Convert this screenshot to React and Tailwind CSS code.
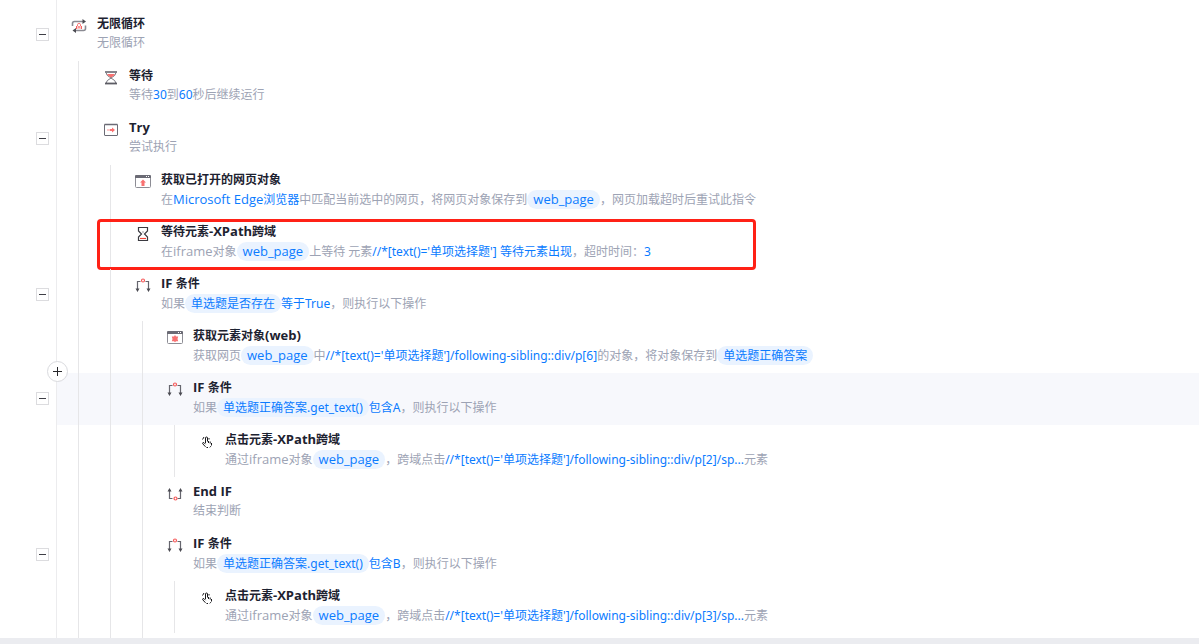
const icons = {
    loop: (
        <>
            <path d="M1.500 8V5.500q0-2 2-2H12" stroke="#8a8a92" strokeWidth="1.600" />
            <path d="M11.500 1L15 3.500 11.500 6z" fill="#4b4b52" />
            <path d="M14.500 7.500v3q0 2-2 2H4" stroke="#8a8a92" strokeWidth="1.600" />
            <path d="M5 10L1.500 12.500 5 15z" fill="#4b4b52" />
            <path d="M6.500 8V6.500q0-1 1.500-1t1.500 1V8" stroke="#f87171" />
            <path d="M5 8h6v3H5z" fill="#fecaca" />
            <path d="M5.500 8v3M8 8v2M10.500 8v3" stroke="#f4605f" />
        </>
    ),
    wait: (
        <>
            <path d="M3 2.500q0 3 5 5.500q-5 2.500-5 5.500M13 2.500q0 3-5 5.500q5 2.500 5 5.500" stroke="#77777f" />
            <path d="M4 4h8Q11 6 8 7.500Q5 6 4 4z" fill="#f87171" />
            <path d="M2 2h12" stroke="#85858d" strokeWidth="2" />
            <path d="M2 13.500h12" stroke="#5c5c64" strokeWidth="1.800" />
        </>
    ),
    tryBox: (
        <>
            <rect x="1.500" y="2.500" width="13" height="11" rx=".5" stroke="#6b6b75" />
            <path d="M1.500 2.500h13" stroke="#6b6b75" strokeWidth="1.500" />
            <path d="M4 8h3" stroke="#fecaca" strokeWidth="2" />
            <path d="M7 8h3" stroke="#f87171" strokeWidth="2" />
            <path d="M9 5.500L12 8l-3 2.500z" fill="#f87171" />
        </>
    ),
    page: (
        <>
            <rect x=".5" y="2.500" width="15" height="11" rx="1" stroke="#8d8d95" />
            <path d="M0 2q0-1 1-1h14q1 0 1 1v2H0z" fill="#6b6b75" />
            <path d="M11 2.500h1M13 2.500h1" stroke="#fff" />
            <path d="M8 5.500l3 3H9.500V12h-3V8.500H5z" fill="#f87171" />
        </>
    ),
    element: (
        <>
            <rect x=".5" y="2.500" width="15" height="11" rx="1" stroke="#8d8d95" />
            <path d="M0 2q0-1 1-1h14q1 0 1 1v2H0z" fill="#6b6b75" />
            <path d="M11 2.500h1M13 2.500h1" stroke="#fff" />
            <path d="M8 5l1 1.500h2.200L10.500 9l.7 2.200H9L8 12.200l-1-1H4.800L5.500 9l-.7-2.500H7z" fill="#f87171" />
        </>
    ),
    hourglass: (
        <>
            <path d="M3.500 1.500h9v3.500L9.500 8l3 3v3.500h-9V11l3-3-3-3z" stroke="#3a3a40" strokeWidth="1.200" />
            <path d="M7.500 5.500h1v1h-1z" fill="#3a3a40" />
            <path d="M5 12.500h6" stroke="#f04438" strokeWidth="1.200" />
        </>
    ),
    branch: (
        <>
            <path d="M5.500 3.500h-3V12M10.500 3.500h3V12" stroke="#66666e" strokeWidth="1.200" />
            <path d="M.5 10.500h4l-2 3.500zM11.500 10.500h4l-2 3.500z" fill="#4b4b52" />
            <circle cx="8" cy="2.500" r="1.500" stroke="#f65a5a" strokeWidth="1.200" />
        </>
    ),
    branchEnd: (
        <>
            <path d="M5.500 12.500h-3V4M10.500 12.500h3V4" stroke="#66666e" strokeWidth="1.200" />
            <path d="M.5 5.500h4L2.500 2zM11.500 5.500h4l-2-3.500z" fill="#4b4b52" />
            <circle cx="8.500" cy="12.500" r="1.500" stroke="#f65a5a" strokeWidth="1.200" />
        </>
    ),
    click: (
        <>
            <path d="M6.500 9V4q0-1 1-1t1 1v3.500M12.500 9v2.500M11.800 12.200l-1 1.200M9 13.500H7.500M6.500 12.800L3.500 9.500q0-1.200 1.500-.8l1.500 1.500" stroke="#18181b" />
            <path d="M3.500 5.500L5 3M10 5.500V4M9.500 7v2M11.200 7.500v2" stroke="#18181b" />
        </>
    ),
}

// strings are plain text, { b } is a highlighted value and { tag } is a variable
const steps = [
    { depth: 0, icon: "loop", title: "无限循环", desc: ["无限循环"], fold: true },
    { depth: 1, icon: "wait", title: "等待", desc: ["等待", { b: "30" }, "到", { b: "60" }, "秒后继续运行"] },
    { depth: 1, icon: "tryBox", title: "Try", desc: ["尝试执行"], fold: true },
    {
        depth: 2, icon: "page", title: "获取已打开的网页对象",
        desc: ["在", { b: "Microsoft Edge浏览器" }, "中匹配当前选中的网页，将网页对象保存到", { tag: "web_page" }, "，网页加载超时后重试此指令"],
    },
    {
        depth: 2, icon: "hourglass", title: "等待元素-XPath跨域", marked: true,
        desc: ["在iframe对象", { tag: "web_page" }, "上等待 元素", { b: "//*[text()='单项选择题'] 等待元素出现" }, "，超时时间：", { b: "3" }],
    },
    {
        depth: 2, icon: "branch", title: "IF 条件", fold: true,
        desc: ["如果", { tag: "单选题是否存在" }, { b: "等于True" }, "，则执行以下操作"],
    },
    {
        depth: 3, icon: "element", title: "获取元素对象(web)",
        desc: ["获取网页", { tag: "web_page" }, "中", { b: "//*[text()='单项选择题']/following-sibling::div/p[6]" }, "的对象，将对象保存到", { tag: "单选题正确答案" }],
    },
    {
        depth: 3, icon: "branch", title: "IF 条件", fold: true, active: true,
        desc: ["如果", { tag: "单选题正确答案.get_text()" }, { b: "包含A" }, "，则执行以下操作"],
    },
    {
        depth: 4, icon: "click", title: "点击元素-XPath跨域",
        desc: ["通过iframe对象", { tag: "web_page" }, "，跨域点击", { b: "//*[text()='单项选择题']/following-sibling::div/p[2]/sp..." }, "元素"],
    },
    { depth: 3, icon: "branchEnd", title: "End IF", desc: ["结束判断"] },
    {
        depth: 3, icon: "branch", title: "IF 条件", fold: true,
        desc: ["如果", { tag: "单选题正确答案.get_text()" }, { b: "包含B" }, "，则执行以下操作"],
    },
    {
        depth: 4, icon: "click", title: "点击元素-XPath跨域",
        desc: ["通过iframe对象", { tag: "web_page" }, "，跨域点击", { b: "//*[text()='单项选择题']/following-sibling::div/p[3]/sp..." }, "元素"],
    },
]

// latin names are set one size up from the chinese text, numbers and code keep its size
function Mixed({ text, title }) {
    return text.split(/([\x20-\x7E]+)/).map((part, i) => {
        if (i % 2 === 0) return part
        const isName = title || /^[A-Za-z_ ]{5,}$/.test(part)
        return (
            <span key={i} className={isName ? "text-[13px] leading-none font-['Open_Sans',sans-serif]" : "leading-none"}>{part}</span>
        )
    })
}

function Part({ part }) {
    if (typeof part === "string") return <Mixed text={part} />
    if (part.tag) {
        return (
            <span className="inline-block h-[19px] leading-[19px] px-1.5 rounded-full bg-[#eaf3ff] text-[#0a7bff] align-top">
                <Mixed text={part.tag} />
            </span>
        )
    }
    return <span className="text-[#0a7bff]"><Mixed text={part.b} /></span>
}

function Guides({ depth }) {
    return Array.from({ length: depth }, (_, i) => (
        <div key={i} className="w-8 shrink-0 pl-[21px]">
            <div className="w-px h-full bg-[#e6e6e8]"></div>
        </div>
    ))
}

function Step({ step }) {
    const hasTag = step.desc.some((part) => part.tag)

    return (
        <li className="relative flex h-13">
            <div className="w-14 shrink-0 pl-9 pt-[19px]">
                {step.fold && (
                    <button aria-label="折叠" className="flex items-center justify-center size-[13px] border border-[#dcdcdf] bg-white">
                        <span className="w-[7px] h-px bg-[#3f3f46]"></span>
                    </button>
                )}
            </div>
            <div className={"flex flex-1 min-w-0 border-l border-[#ececee] " + (step.active ? "bg-[#f7f8fc]" : "")}>
                <Guides depth={step.depth} />
                <svg className="size-4 shrink-0 ml-3.5 mt-[9px]" viewBox="0 0 16 16" fill="none">{icons[step.icon]}</svg>
                <div className="pl-2.5 pt-[5px] text-xs whitespace-nowrap">
                    <h2 className="h-5 leading-5 font-bold text-[#1d2230]">
                        <Mixed text={step.title} title />
                    </h2>
                    <p className={"text-[#9da3b4] " + (hasTag ? "h-5 leading-5" : "h-[18px] leading-[18px]")}>
                        {step.desc.map((part, i) => <Part key={i} part={part} />)}
                    </p>
                </div>
            </div>
            {step.active && (
                <button aria-label="添加" className="absolute left-[47px] -top-3 size-[21px] rounded-full border border-[#d9dade] bg-white flex items-center justify-center">
                    <svg className="size-[9px]" viewBox="0 0 9 9"><path d="M0 4.500h9M4.500 0v9" stroke="#27272a" /></svg>
                </button>
            )}
            {step.marked && (
                <div className="absolute left-[97px] top-0.5 w-[659px] h-[51px] border-3 border-[#ff2116] rounded-sm pointer-events-none"></div>
            )}
        </li>
    )
}

export default function App() {
    return (
        <main className="flex flex-col min-h-screen overflow-hidden bg-white font-['Noto_Sans','Noto_Sans_CJK_SC',sans-serif]">
            <div className="h-[9px] ml-14 border-l border-[#ececee]"></div>
            <ul>
                {steps.map((step, i) => <Step key={i} step={step} />)}
            </ul>
            <div className="flex flex-1 ml-14 border-l border-[#ececee]">
                <Guides depth={3} />
            </div>
            <div className="h-1.5 bg-[#ebecf0]"></div>
        </main>
    )
}
